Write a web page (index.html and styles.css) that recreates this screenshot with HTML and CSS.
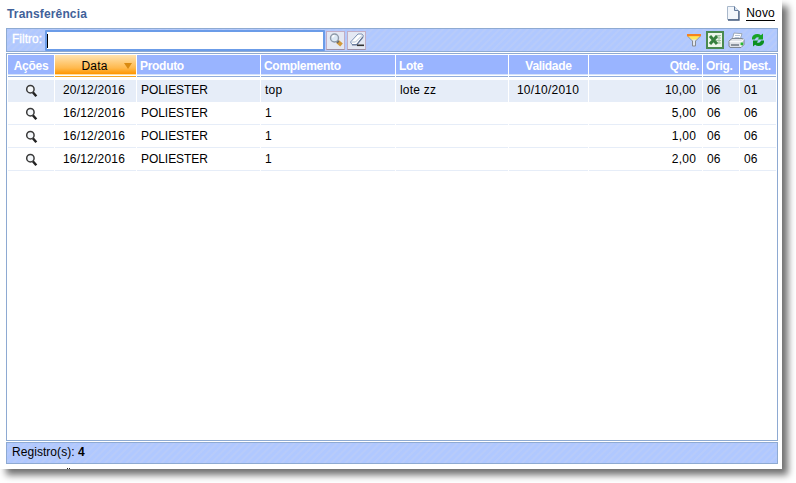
FILE: index.html
```html
<!DOCTYPE html>
<html lang="pt-BR">
<head>
<meta charset="utf-8">
<title>Transferência</title>
<link rel="stylesheet" href="styles.css">
</head>
<body>
<svg width="0" height="0" class="defs">
  <symbol id="lens" viewBox="0 0 14 14">
    <path d="M7.8 8.2 11.3 12.3" stroke="#222" stroke-width="2.5"/>
    <circle cx="5.4" cy="5.2" r="3.7" fill="#f4f7fa" stroke="#3a3a3a" stroke-width="1.5"/>
  </symbol>
</svg>
<main class="window">
  <header class="title">
    <h1>Transferência</h1>
    <a class="new">
      <svg width="14" height="16" viewBox="0 0 14 16"><path d="M1.5 1.5h7l4 4v9h-11z" fill="#f2f6fb" stroke="#a9b8cb"/><path d="M2 15h11V6" fill="none" stroke="#43597c" stroke-width="1.3"/><path d="M8.5 1.5v4h4" fill="#d4e0ee" stroke="#647b9c"/></svg>
      <span>Novo</span>
    </a>
  </header>
  <div class="toolbar">
    <label>Filtro:</label>
    <div class="field"><i class="caret"></i></div>
    <button class="btn"><svg width="16" height="16" viewBox="0 0 16 16"><path d="m9.5 9.5 4 3.5" stroke="#d39a3a" stroke-width="4"/><path d="m8.5 8.5 2 2" stroke="#666" stroke-width="2.5"/><circle cx="6.5" cy="6" r="4" fill="#dce9f5" stroke="#8e9aa8" stroke-width="1.4"/><path d="M4.5 5.5q.4-1.6 2-2" fill="none" stroke="#fff" stroke-width="1.3"/></svg></button>
    <button class="btn"><svg width="16" height="16" viewBox="0 0 16 16"><path d="M9 2h4l1.5 2-6.500 8.500H3L1.500 10z" fill="#fff" stroke="#7c92b5"/><path d="M2 10h4.500L13.500 3" fill="none" stroke="#b5c3d8"/><path d="M3 12.800h4.500L14 5" fill="none" stroke="#667796" stroke-width="1.2"/><path d="M8 13.300h7" stroke="#333" stroke-width="1.600"/></svg></button>
    <div class="tools">
      <svg width="16" height="16" viewBox="0 0 16 16"><path d="M2 4.500 6.500 9v5h3V9L14 4.500z" fill="#e2e8f0" stroke="#858990"/><path d="M3 4.500h10L10.500 7.500h-5z" fill="#ffe75e"/><path d="M1 2h14v1.500L14 5H2L1 3.500z" fill="#f58220"/><path d="M2.500 4.500h11" stroke="#ffd84a"/></svg>
      <svg width="18" height="18" viewBox="0 0 18 18"><path d="M1 1h16v16H1z" fill="#edf6ea" stroke="#4a8a50" stroke-width="2"/><path d="M10 4.500h5M10 7h5M10 9.500h5M9 12h6M13 4v9" stroke="#a2c4a3"/><path d="m4 5 7 8M11 5l-7 8" stroke="#37803e" stroke-width="3"/></svg>
      <svg width="17" height="17" viewBox="0 0 17 17"><path d="m6 1 8 .7L12 8H4z" fill="#fff" stroke="#9ba7b7"/><path d="M7 3.500h5M6.500 5.500h5" stroke="#b5c3d5"/><path d="m1 9 3-2.500h10l2 1v5l-3 3H2L1 14z" fill="#dfe2e7" stroke="#7e8792"/><path d="M1.500 9.700h11.300V15M12.800 9.700 16 7.500" fill="none" stroke="#fff"/><path d="M3 13h8" stroke="#747e89" stroke-width="1.600"/><path d="M12.500 10.500h2.700v2.700h-2.700z" fill="#28b832"/></svg>
      <svg width="14" height="16" viewBox="0 0 14 16"><path d="M1 7.500V5.700Q2 2 6.300 2q2.200 0 3.600 1.200L12 1.500v6H6.500l1.700-1.800Q5.500 4 3.800 7.500z" fill="#18a326"/><path d="M13 8.500v1.800Q12 14 7.700 14q-2.200 0-3.600-1.200L2 14.500v-6h5.500l-1.700 1.800q2.700 1.700 4.400-1.800z" fill="#0b8f20"/></svg>
    </div>
  </div>
  <section class="grid">
    <div class="row head">
      <div class="c">Ações</div><div class="c sorted">Data<i class="arrow"></i></div><div>Produto</div><div>Complemento</div><div>Lote</div><div class="c">Validade</div><div class="r">Qtde.</div><div>Orig.</div><div>Dest.</div>
    </div>
    <div class="row first">
      <div class="c"><svg width="14" height="14"><use href="#lens"/></svg></div><div class="c">20/12/2016</div><div class="p">POLIESTER</div><div>top</div><div>lote zz</div><div class="c v">10/10/2010</div><div class="r">10,00</div><div>06</div><div>01</div>
    </div>
    <div class="row">
      <div class="c"><svg width="14" height="14"><use href="#lens"/></svg></div><div class="c">16/12/2016</div><div class="p">POLIESTER</div><div>1</div><div></div><div></div><div class="r">5,00</div><div>06</div><div>06</div>
    </div>
    <div class="row">
      <div class="c"><svg width="14" height="14"><use href="#lens"/></svg></div><div class="c">16/12/2016</div><div class="p">POLIESTER</div><div>1</div><div></div><div></div><div class="r">1,00</div><div>06</div><div>06</div>
    </div>
    <div class="row">
      <div class="c"><svg width="14" height="14"><use href="#lens"/></svg></div><div class="c">16/12/2016</div><div class="p">POLIESTER</div><div>1</div><div></div><div></div><div class="r">2,00</div><div>06</div><div>06</div>
    </div>
  </section>
  <footer class="status">Registro(s):&nbsp;<b>4</b></footer>
  <div class="clip"><i></i><i></i></div>
</main>
</body>
</html>
```
FILE: styles.css
```css
* { box-sizing: border-box; }
body {
  margin: 0;
  height: 483px;
  overflow: hidden;
  background: #fff;
  font: 12px/14px "Liberation Sans", Arial, sans-serif;
  letter-spacing: .2px;
  color: #000;
}
.defs { display: block; }
.window {
  width: 782px;
  height: 469px;
  padding: 0 4px 0 6px;
  background: #fff;
  box-shadow: 6px 6px 7px rgba(0, 0, 0, .56);
  display: flex;
  flex-direction: column;
}
.title {
  height: 28px;
  padding: 0 3px 2px 1px;
  display: flex;
  align-items: center;
  justify-content: space-between;
}
.title h1 { margin: 2px 0 0; font-size: 12px; letter-spacing: .15px; color: #416199; }
.new { display: flex; align-items: center; gap: 6px; }
.new span { margin-top: 1px; border-bottom: 1px solid #000; line-height: 13px; }
.toolbar, .status {
  border: 1px solid #8eaad2;
  background: repeating-linear-gradient(135deg, #b0c8ff 0 2px, #b7cbfa 3px 4px, #b0c8ff 5px);
}
.toolbar {
  height: 24px;
  display: flex;
  align-items: center;
  padding: 0 12px 0 5px;
}
.toolbar label { width: 33px; color: #fff; padding-bottom: 2px; letter-spacing: 0; -webkit-text-stroke: .3px #fff; }
.field {
  width: 280px;
  height: 21px;
  background: #fff;
  border: 2px solid #6b9ce8;
  border-radius: 1px;
  padding: 2px 0 0;
}
.caret { display: block; width: 1px; height: 14px; background: #000; }
.btn {
  width: 19px;
  height: 19px;
  margin-left: 1px;
  padding: 0;
  border: 1px solid #c2aec5;
  border-bottom-color: #9c8fa5;
  background: #e4e8f3;
  display: grid;
  place-items: center;
}
.btn + .btn { margin-left: 2px; }
.tools { margin-left: auto; display: flex; align-items: center; gap: 4px; }
.tools svg:last-child { margin-left: 2px; }
.grid {
  height: 388px;
  margin-top: 1px;
  border: 1px solid #8eaad2;
  padding: 1px 1px 0;
}
.row {
  display: grid;
  grid-template-columns: 47px 82px 124px 135px 113px 80px 114px 37px 36px;
  height: 23px;
}
.row > div {
  border-bottom: 1px solid #e6edf8;
  margin-right: 1px;
  padding: 4px 6px 0 4px;
  white-space: nowrap;
}
.row > div:last-child { margin-right: 0; }
.row .c { padding: 4px 3px 0 0; text-align: center; }
.row .c svg { display: block; margin: 1px auto 0 17px; }
.row .p { letter-spacing: -.05px; }
.row .r { text-align: right; }
.first { height: 22px; }
.first > div { background: #e6edf8; padding-top: 3px; }
.row.first .c { padding-top: 3px; }
.row.first .v { padding-right: 1px; }
.head { height: 22px; margin-bottom: 3px; }
.row.head > div {
  height: 22px;
  color: #fff;
  font-weight: bold;
  letter-spacing: -.3px;
  padding: 4px 3px 0;
  border-bottom: 1px solid #91addb;
  background: linear-gradient(#99b4ff 0 19px, #d4e2fb 19px 20px, #fff 20px);
}
.row.head .c { padding: 4px 0 0; }
.row.head .sorted {
  display: grid;
  grid-template-columns: 1fr 12px;
  padding-left: 10px;
  color: #000;
  font-weight: normal;
  letter-spacing: .2px;
  border-bottom-color: #f5a623;
  background: linear-gradient(#ffe3b0, #ffb94d 13px, #ff9600 19px, #ffdca0 19px 20px, #fff 20px);
}
.arrow {
  width: 0;
  height: 0;
  margin-top: 4px;
  border: 4px solid transparent;
  border-top: 6px solid #d98a12;
  border-bottom: 0;
}
.status { height: 22px; margin-top: 1px; padding: 2px 5px; letter-spacing: .05px; }
.clip { display: flex; gap: 1px; padding: 4px 0 0 61px; }
.clip i { width: 1px; height: 1px; background: #222; }
```
